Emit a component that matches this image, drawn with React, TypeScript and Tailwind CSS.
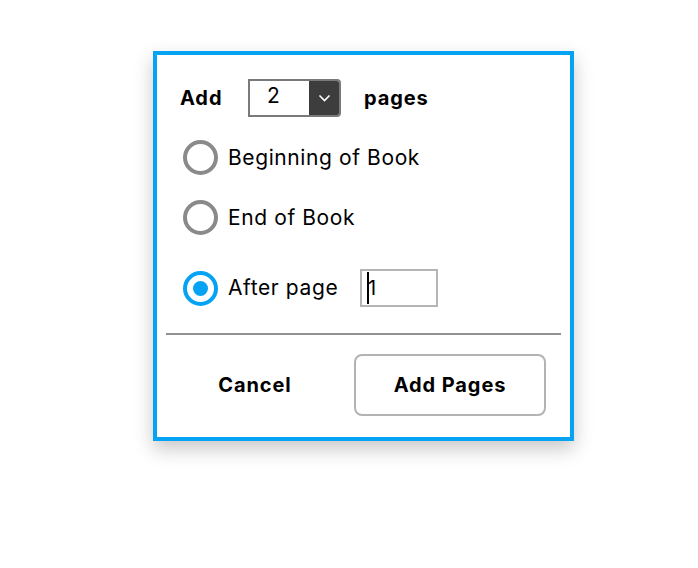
import React from 'react';

const font = { fontFamily: 'Inter, "Liberation Sans", sans-serif' };

const Radio: React.FC<{ checked?: boolean }> = ({ checked }) => (
    <div
        className={`w-[35px] h-[35px] rounded-full border-[4px] flex items-center justify-center shrink-0 ${checked ? 'border-[#06a3f5]' : 'border-[#8a8a8a]'}`}
    >
        {checked && <div className="w-[15px] h-[15px] rounded-full bg-[#06a3f5]" />}
    </div>
);

export default function App() {
    return (
        <div className="w-[698px] h-[568px] bg-white text-black" style={font}>
            <div className="pt-[51px] pl-[153px]">
                <div className="w-[421px] h-[390px] border-[4px] border-[#06a3f5] bg-white shadow-[0_8px_18px_rgba(0,0,0,0.22)] flex flex-col">
                    {/* add N pages */}
                    <div className="flex items-center mt-[24px] pl-[23px] h-[38px]">
                        <span className="w-[68px] text-[20px] font-bold tracking-[0.9px]">Add</span>
                        <div className="flex w-[93px] h-[38px] border-2 border-[#7a7a7a] rounded-r-[4px] overflow-hidden">
                            <div className="flex-1 pl-[17px] text-[21px] leading-[30px]">2</div>
                            <div className="w-[30px] bg-[#3d3d3d] flex items-center justify-center">
                                <svg width="13" height="8" viewBox="0 0 13 8" fill="none">
                                    <path d="M1.5 1.5L6.5 6.5L11.5 1.5" stroke="white" strokeWidth="1.6" />
                                </svg>
                            </div>
                        </div>
                        <span className="ml-[23px] text-[20px] font-bold tracking-[0.9px]">pages</span>
                    </div>

                    {/* options */}
                    <div className="flex items-center gap-[10px] pl-[26px] mt-[23px] h-[35px]">
                        <Radio />
                        <span className="text-[21px] tracking-[0.6px]">Beginning of Book</span>
                    </div>
                    <div className="flex items-center gap-[10px] pl-[26px] mt-[25px] h-[35px]">
                        <Radio />
                        <span className="text-[21px] tracking-[0.6px]">End of Book</span>
                    </div>
                    <div className="flex items-center pl-[26px] mt-[34px] h-[38px]">
                        <Radio checked />
                        <span className="ml-[10px] w-[132px] text-[21px] tracking-[0.6px]">After page</span>
                        <div className="w-[78px] h-[38px] border-2 border-[#b5b5b5] flex items-center pl-[5px]">
                            <span className="w-[2px] h-[32px] bg-black" />
                            <span className="text-[20px] -ml-[1px]">1</span>
                        </div>
                    </div>

                    <div className="mx-[9px] mt-[26px] h-[2px] bg-[#919191]" />

                    {/* actions */}
                    <div className="flex items-center justify-between pl-[2px] pr-[24px] mt-[19px]">
                        <button className="w-[192px] h-[62px] text-[20px] font-bold tracking-[0.9px]">Cancel</button>
                        <button className="w-[192px] h-[62px] text-[20px] font-bold tracking-[0.9px] border-2 border-[#b3b3b3] rounded-[8px]">Add Pages</button>
                    </div>
                </div>
            </div>
        </div>
    );
}
